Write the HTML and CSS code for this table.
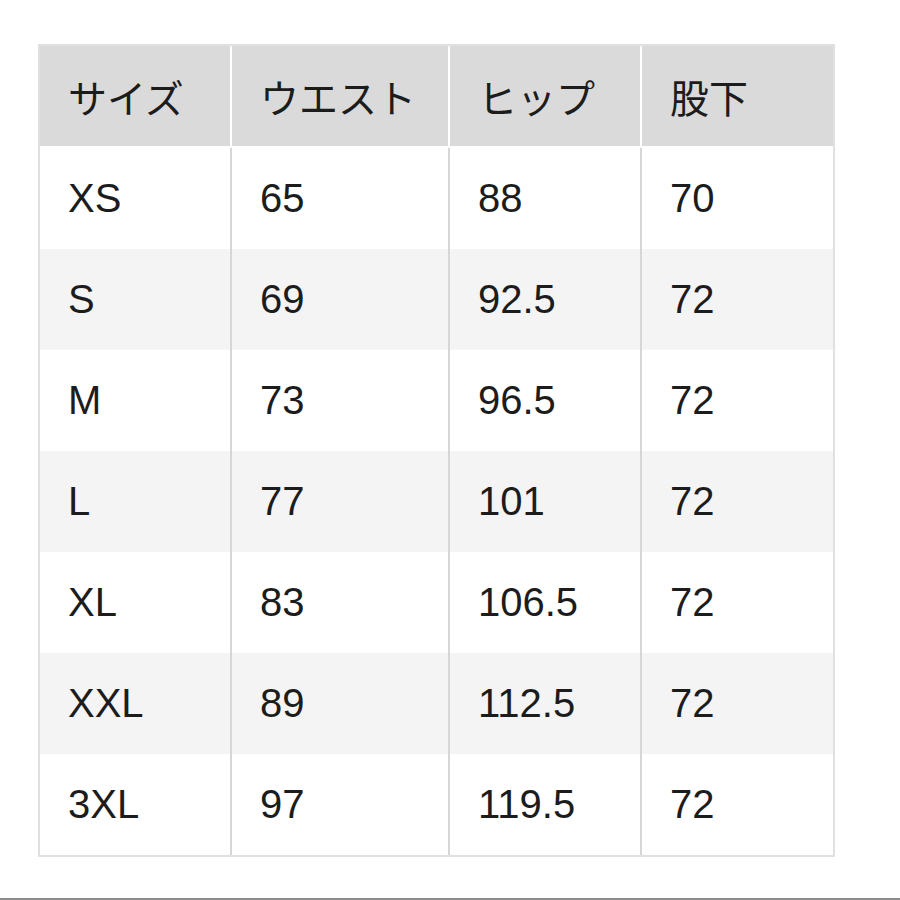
FILE: index.html
```html
<!DOCTYPE html>
<html lang="ja">
<head>
<meta charset="utf-8">
<title>サイズ表</title>
<link rel="stylesheet" href="styles.css">
</head>
<body>
<div class="page">
  <table class="size-table">
    <colgroup>
      <col class="c1"><col class="c2"><col class="c3"><col class="c4">
    </colgroup>
    <thead>
      <tr><th>サイズ</th><th>ウエスト</th><th>ヒップ</th><th>股下</th></tr>
    </thead>
    <tbody>
      <tr><td>XS</td><td>65</td><td>88</td><td>70</td></tr>
      <tr class="alt"><td>S</td><td>69</td><td>92.5</td><td>72</td></tr>
      <tr><td>M</td><td>73</td><td>96.5</td><td>72</td></tr>
      <tr class="alt"><td>L</td><td>77</td><td>101</td><td>72</td></tr>
      <tr><td>XL</td><td>83</td><td>106.5</td><td>72</td></tr>
      <tr class="alt"><td>XXL</td><td>89</td><td>112.5</td><td>72</td></tr>
      <tr><td>3XL</td><td>97</td><td>119.5</td><td>72</td></tr>
    </tbody>
  </table>
  <div class="rule"></div>
</div>
</body>
</html>
```

FILE: styles.css
```css
html, body {
  margin: 0;
  padding: 0;
  background: #ffffff;
}

.page {
  padding-top: 44px;
  font-family: "Liberation Sans", "Noto Sans CJK JP", sans-serif;
  color: #1c1c1c;
}

.size-table {
  margin-left: 38px;
  border-collapse: separate;
  border-spacing: 0;
  border: 2px solid #e0e0e0;
  table-layout: fixed;
  width: 797px;
  font-size: 40px;
  line-height: 1;
}

.c1 { width: 190px; }
.c2 { width: 218px; }
.c3 { width: 192px; }
.c4 { width: 193px; }

.size-table th,
.size-table td {
  text-align: left;
  vertical-align: middle;
  padding: 0 0 0 28px;
  font-weight: normal;
  white-space: nowrap;
  box-sizing: border-box;
}

.size-table th {
  height: 102px;
  background: #dadada;
  border-bottom: 2px solid #ffffff;
  font-family: "Noto Sans CJK JP", sans-serif;
  font-size: 39px;
}

.size-table th + th {
  border-left: 2px solid #ffffff;
}

.size-table td {
  height: 101px;
  padding-bottom: 1px;
}

.size-table td + td {
  border-left: 2px solid #d6d6d6;
}

.size-table tr.alt td {
  background: #f4f4f4;
}

.rule {
  margin-top: 41px;
  height: 2px;
  background: #8c8c8c;
}
```
